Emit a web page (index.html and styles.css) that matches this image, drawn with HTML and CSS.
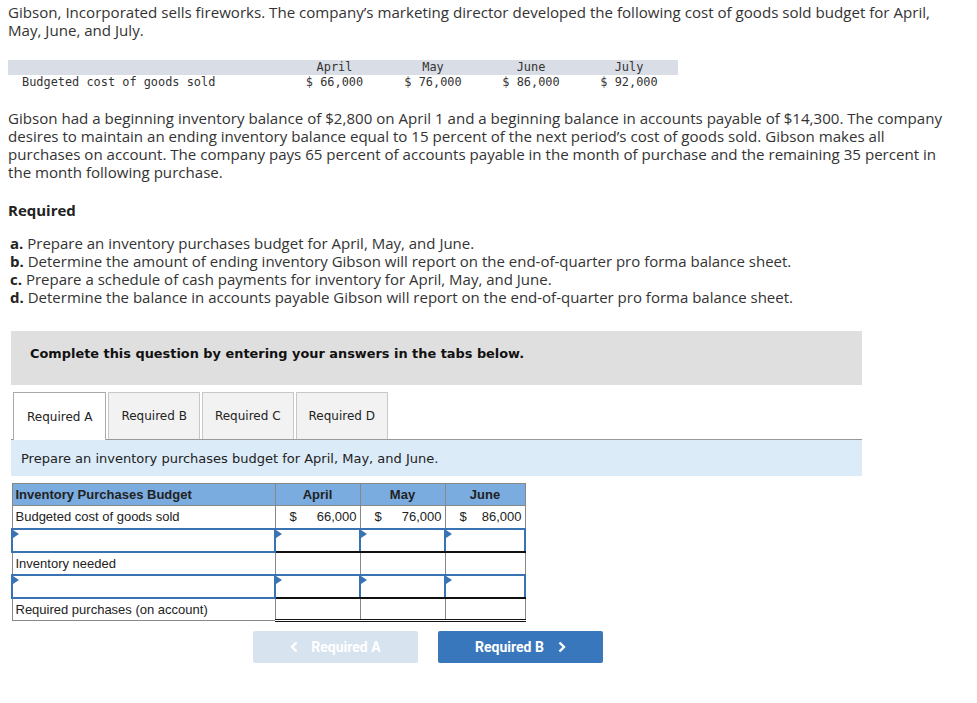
FILE: index.html
```html
<!DOCTYPE html>
<html>
<head>
<meta charset="utf-8">
<link rel="stylesheet" href="styles.css">
</head>
<body>
<div class="page">
  <p class="intro">Gibson, Incorporated sells fireworks. The company’s marketing director developed the following cost of goods sold budget for April, May, June, and July.</p>

  <table class="cogs">
    <tr class="cogs-head">
      <td class="cogs-label"></td>
      <td>April</td>
      <td>May</td>
      <td>June</td>
      <td>July</td>
    </tr>
    <tr>
      <td class="cogs-label">Budgeted cost of goods sold</td>
      <td>$ 66,000</td>
      <td>$ 76,000</td>
      <td>$ 86,000</td>
      <td>$ 92,000</td>
    </tr>
  </table>

  <p class="intro para2">Gibson had a beginning inventory balance of $2,800 on April 1 and a beginning balance in accounts payable of $14,300. The company desires to maintain an ending inventory balance equal to 15 percent of the next period’s cost of goods sold. Gibson makes all purchases on account. The company pays 65 percent of accounts payable in the month of purchase and the remaining 35 percent in the month following purchase.</p>

  <h3 class="req-title">Required</h3>
  <ul class="req-list">
    <li><b>a.</b> Prepare an inventory purchases budget for April, May, and June.</li>
    <li><b>b.</b> Determine the amount of ending inventory Gibson will report on the end-of-quarter pro forma balance sheet.</li>
    <li><b>c.</b> Prepare a schedule of cash payments for inventory for April, May, and June.</li>
    <li><b>d.</b> Determine the balance in accounts payable Gibson will report on the end-of-quarter pro forma balance sheet.</li>
  </ul>

  <div class="complete-box">Complete this question by entering your answers in the tabs below.</div>

  <div class="tabs">
    <div class="tab active">Required A</div>
    <div class="tab">Required B</div>
    <div class="tab">Required C</div>
    <div class="tab">Required D</div>
  </div>
  <div class="instruction">Prepare an inventory purchases budget for April, May, and June.</div>

  <table class="budget">
    <colgroup>
      <col class="c-label">
      <col class="c-num">
      <col class="c-num">
      <col class="c-num2">
    </colgroup>
    <tr class="b-head">
      <th class="left">Inventory Purchases Budget</th>
      <th>April</th>
      <th>May</th>
      <th>June</th>
    </tr>
    <tr class="b-row">
      <td>Budgeted cost of goods sold</td>
      <td class="num"><span class="cur">$</span><span>66,000</span></td>
      <td class="num"><span class="cur">$</span><span>76,000</span></td>
      <td class="num"><span class="cur">$</span><span>86,000</span></td>
    </tr>
    <tr class="b-row">
      <td class="inp"><span class="flag"></span></td>
      <td class="inp inp-num"><span class="flag"></span></td>
      <td class="inp inp-num"><span class="flag"></span></td>
      <td class="inp inp-num"><span class="flag"></span></td>
    </tr>
    <tr class="b-row">
      <td>Inventory needed</td>
      <td></td>
      <td></td>
      <td></td>
    </tr>
    <tr class="b-row">
      <td class="inp"><span class="flag"></span></td>
      <td class="inp inp-num"><span class="flag"></span></td>
      <td class="inp inp-num"><span class="flag"></span></td>
      <td class="inp inp-num"><span class="flag"></span></td>
    </tr>
    <tr class="b-row">
      <td>Required purchases (on account)</td>
      <td class="dul"></td>
      <td class="dul"></td>
      <td class="dul"></td>
    </tr>
  </table>

  <div class="nav">
    <div class="btn btn-prev"><svg class="chev-l" width="8" height="12" viewBox="0 0 8 12"><polyline points="6.5,1.5 2,6 6.5,10.5" fill="none" stroke="#fff" stroke-width="2.4"/></svg>Required A</div>
    <div class="btn btn-next">Required B<svg class="chev-r" width="8" height="12" viewBox="0 0 8 12"><polyline points="1.5,1.5 6,6 1.5,10.5" fill="none" stroke="#fff" stroke-width="2.4"/></svg></div>
  </div>
</div>
</body>
</html>
```

FILE: styles.css
```css
* { box-sizing: border-box; }
html, body { margin: 0; padding: 0; background: #fff; }
body { font-family: "Open Sans", "Lato", sans-serif; color: #333; }
.page { padding: 3px 8px 0 8px; width: 977px; }

.intro {
  margin: 0;
  font-size: 15.1px;
  line-height: 18px;
  color: #333;
  width: 943px;
}

.cogs {
  border-collapse: collapse;
  margin-top: 21px;
  font-family: "DejaVu Sans Mono", "Liberation Mono", monospace;
  font-size: 11.9px;
  color: #333;
  table-layout: fixed;
  width: 670px;
}
.cogs td { padding: 0; height: 15px; line-height: 15px; text-align: center; white-space: nowrap; }
.cogs-head { background: #d9dde6; }
.cogs td.cogs-label { text-align: left; padding-left: 14px; width: 277px; }
.cogs td:nth-child(2) { width: 99px; }
.cogs td:nth-child(3) { width: 98px; }
.cogs td:nth-child(4) { width: 98px; }
.cogs td:nth-child(5) { width: 98px; }

.para2 { margin-top: 19px; }

.req-title {
  margin: 20px 0 0 0;
  font-size: 15px;
  font-weight: 700;
  line-height: 18px;
  color: #222;
}
.req-list {
  list-style: none;
  margin: 15px 0 0 0;
  padding: 0 0 0 2px;
  font-size: 15px;
  line-height: 18px;
}
.req-list b { color: #222; }

.complete-box {
  margin: 25px 0 0 3px;
  width: 851px;
  height: 54px;
  background: #dfdfdf;
  font-family: "DejaVu Sans", Verdana, sans-serif;
  font-weight: 700;
  font-size: 12.9px;
  color: #111;
  display: flex;
  align-items: center;
  padding-left: 19px;
  padding-bottom: 9px;
}

.tabs {
  display: flex;
  margin: 7px 0 0 3px;
  width: 851px;
  border-bottom: 1px solid #999;
  gap: 2px;
  padding-left: 2px;
  height: 48px;
}
.tab {
  height: 47px;
  padding: 0 12px;
  background: #f2f2f2;
  border: 1px solid #c8c8c8;
  border-bottom: none;
  font-family: "DejaVu Sans", Verdana, sans-serif;
  font-size: 12px;
  color: #222;
  display: flex;
  align-items: center;
  padding-bottom: 1px;
}
.tab.active {
  background: #fff;
  border-color: #aaa;
  height: 48px;
  margin-bottom: -1px;
  padding: 0 13px;
}

.instruction {
  margin-left: 3px;
  width: 851px;
  height: 36px;
  background: #dbebf8;
  font-family: "DejaVu Sans", Verdana, sans-serif;
  font-size: 13px;
  color: #222;
  display: flex;
  align-items: center;
  padding-left: 10px;
}

.budget {
  margin: 7px 0 0 3px;
  border-collapse: collapse;
  font-family: "Liberation Sans", Arial, sans-serif;
  font-size: 13px;
  color: #222;
  width: 513px;
  table-layout: fixed;
}
.c-label { width: 263px; }
.c-num { width: 85px; }
.c-num2 { width: 80px; }
.budget th, .budget td { border: 1px solid #888; padding: 0 3px; height: 23px; white-space: nowrap; }
.b-head th {
  background: #7aacdf;
  font-weight: 700;
  text-align: center;
  height: 22px;
}
.b-head th.left { text-align: left; }
.budget td.num { text-align: right; }
.budget td.num .cur { float: left; padding-left: 11px; }
.budget td.inp {
  border: 2px solid #3a73b3;
  position: relative;
}
.budget td.inp-num { border-bottom: 2px solid #111; }
.flag {
  position: absolute;
  left: 0;
  top: 0;
  width: 0;
  height: 0;
  border-top: 4px solid transparent;
  border-bottom: 4px solid transparent;
  border-left: 6px solid #3a73b3;
}
.budget td.dul { border-bottom: 3px double #111; }

.nav {
  display: flex;
  gap: 20px;
  margin: 9px 0 0 245px;
}
.btn {
  width: 165px;
  height: 32px;
  border-radius: 2px;
  display: flex;
  align-items: center;
  justify-content: center;
  font-family: "Roboto", "Liberation Sans", sans-serif;
  font-weight: 700;
  font-size: 14px;
  color: #fff;
}
.btn-prev { background: #d8e3f0; }
.btn-next { background: #3877bb; }
.chev-l { margin-right: 13px; }
.chev-r { margin-left: 14px; }
```
